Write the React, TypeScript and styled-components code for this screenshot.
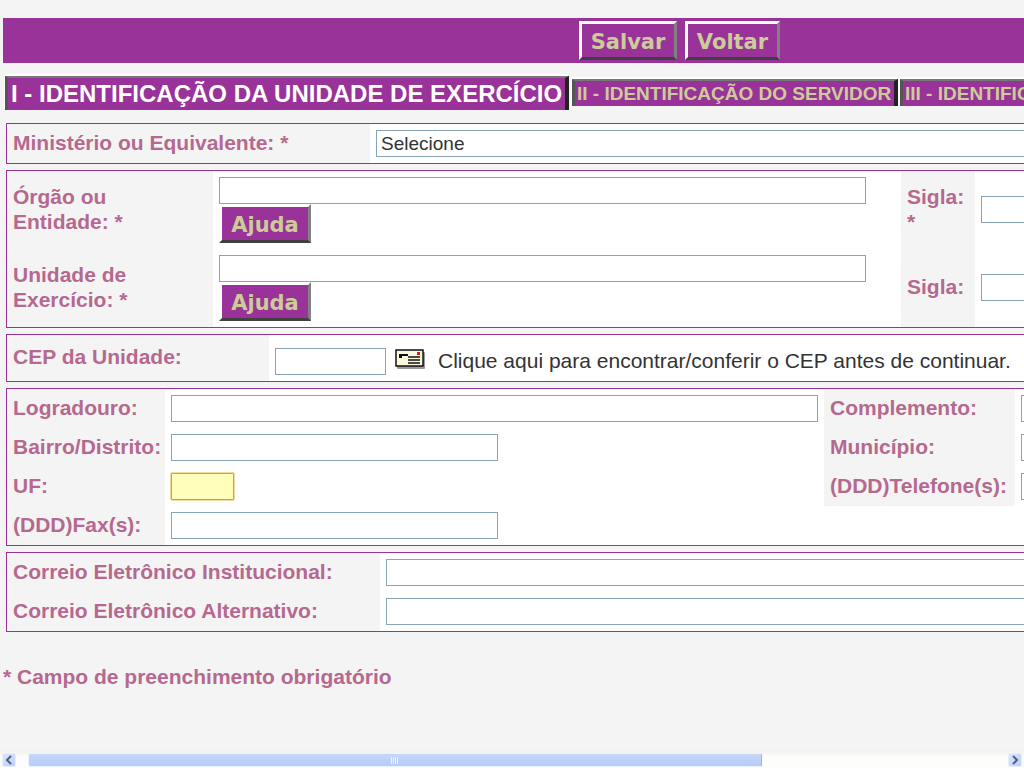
import React from 'react';
import styled, { createGlobalStyle } from 'styled-components';

const PURPLE = '#993399';
const KHAKI = '#cccc99';
const ROSE = '#b5698f';
const PAGE = '#f4f4f4';

const GlobalStyle = createGlobalStyle`
  html, body {
    margin: 0;
    padding: 0;
    background: ${PAGE};
  }
`;

const Page = styled.div`
  width: 1024px;
  height: 768px;
  overflow: hidden;
  display: flex;
  flex-direction: column;
  font-family: "Liberation Sans", Arial, sans-serif;
  background: ${PAGE};
  padding-top: 18px;
  box-sizing: border-box;
`;

const Toolbar = styled.div`
  flex: none;
  height: 45px;
  margin-left: 3px;
  padding: 3px 0 0 576px;
  box-sizing: border-box;
  background: ${PURPLE};
  display: flex;
  align-items: flex-start;
  gap: 8px;
`;

const Button = styled.button<{ $w: number }>`
  width: ${(p) => p.$w}px;
  height: 39px;
  padding: 2px 0 0;
  border-style: solid;
  border-width: 3px;
  border-color: #ffffff #808080 #404040 #ffffff;
  background: ${PURPLE};
  color: ${KHAKI};
  font-family: "DejaVu Sans", Verdana, sans-serif;
  font-weight: bold;
  font-size: 21px;
`;

const Tabs = styled.div`
  flex: none;
  display: flex;
  align-items: flex-start;
  height: 34px;
  margin: 13px 0 13px 5px;
  white-space: nowrap;
`;

const Tab = styled.div<{ $active?: boolean; $w: number }>`
  flex: none;
  box-sizing: border-box;
  width: ${(p) => p.$w}px;
  overflow: hidden;
  margin-top: ${(p) => (p.$active ? 0 : 3)}px;
  margin-right: ${(p) => (p.$active ? 3 : 2)}px;
  height: ${(p) => (p.$active ? 34 : 27)}px;
  padding: 0 0 0 ${(p) => (p.$active ? 3 : 2)}px;
  display: flex;
  align-items: center;
  background: ${PURPLE};
  border-style: solid;
  border-width: 2px 4px 0 3px;
  border-color: #777777 #222222 ${PURPLE} #555555;
  box-shadow: -1px -2px 0 #ffffff;
  color: ${(p) => (p.$active ? '#ffffff' : KHAKI)};
  font-size: ${(p) => (p.$active ? 24 : 19)}px;
  font-weight: bold;
`;

const Panel = styled.section<{ $cols: string; $rows?: string }>`
  flex: none;
  width: 1100px;
  margin: 0 0 6px 6px;
  box-sizing: border-box;
  border: 1px solid ${PURPLE};
  background: #ffffff;
  display: grid;
  grid-template-columns: ${(p) => p.$cols};
  grid-auto-rows: ${(p) => p.$rows ?? '39px'};
`;

const Label = styled.div<{ $lift?: number }>`
  padding: 0 6px ${(p) => p.$lift ?? 2}px;
  display: flex;
  align-items: center;
  background: ${PAGE};
  color: ${ROSE};
  font-size: 21px;
  font-weight: bold;
  line-height: 25px;
  white-space: nowrap;
`;

const Value = styled.div<{ $center?: boolean }>`
  padding: 6px 6px ${(p) => (p.$center ? 7 : 6)}px;
  display: flex;
  flex-direction: column;
  align-items: flex-start;
  justify-content: ${(p) => (p.$center ? 'center' : 'flex-start')};
  min-width: 0;
`;

const Inline = styled.div`
  padding: 13px 6px 0;
  display: flex;
  align-items: flex-start;
`;

const Input = styled.input<{ $w: number; $warn?: boolean }>`
  flex: none;
  width: ${(p) => p.$w}px;
  height: 27px;
  padding: 0 4px;
  margin: 0;
  box-sizing: border-box;
  border: 1px solid ${(p) => (p.$warn ? '#c4a25c' : '#88a4bb')};
  border-radius: ${(p) => (p.$warn ? 1 : 0)}px;
  box-shadow: ${(p) => (p.$warn ? '0 0 0 1px #f2d9a0' : 'none')};
  background: ${(p) => (p.$warn ? '#ffffbb' : '#ffffff')};
  font-family: inherit;
  font-size: 19px;
  outline: none;
`;

const Select = styled.select`
  width: 700px;
  height: 27px;
  padding: 0 0 0 4px;
  margin: 0;
  box-sizing: border-box;
  border: 1px solid #88a4bb;
  border-radius: 0;
  background: #ffffff;
  color: #333333;
  font-family: inherit;
  font-size: 19px;
  appearance: none;
`;

const CardIcon = styled.svg`
  flex: none;
  margin: 1px 13px 0 9px;
`;

const Hint = styled.span`
  color: #333333;
  font-size: 21px;
  line-height: 26px;
  white-space: nowrap;
`;

const Note = styled.p`
  flex: none;
  margin: 27px 0 0 3px;
  color: ${ROSE};
  font-size: 21px;
  font-weight: bold;
  line-height: 24px;
`;

const Scrollbar = styled.div`
  flex: none;
  margin-top: auto;
  height: 17px;
  padding: 2px 2px 1px;
  box-sizing: border-box;
  display: flex;
  align-items: stretch;
  background: linear-gradient(180deg, #f1f0ea, #fcfcfa 30%, #fdfdfb);
`;

const ScrollArrow = styled.div`
  flex: none;
  width: 14px;
  box-sizing: border-box;
  border: 1px solid #e8effc;
  border-radius: 2px;
  background: linear-gradient(135deg, #dbe6fd, #bccffa);
  display: flex;
  align-items: center;
  justify-content: center;
`;

const ScrollTrack = styled.div`
  flex: 1;
  padding: 0 246px 0 12px;
  display: flex;
  min-width: 0;
`;

const ScrollThumb = styled.div`
  flex: 1;
  box-sizing: border-box;
  border: 1px solid #edf2fe;
  border-right-color: #9db4e2;
  border-radius: 2px;
  background: linear-gradient(180deg, #c6d7fc, #b8ccf8);
  display: flex;
  align-items: center;
  justify-content: center;
`;

const Grip = styled.svg`
  flex: none;
`;

function Arrow ({ left }: { left?: boolean }): React.ReactElement {
  return (
    <ScrollArrow>
      <svg height='10' viewBox='0 0 8 10' width='8'>
        <path
          d={left ? 'M6 1 2 5l4 4' : 'M2 1l4 4-4 4'}
          fill='none'
          stroke='#4d6185'
          strokeWidth='2'
        />
      </svg>
    </ScrollArrow>
  );
}

export default function App (): React.ReactElement {
  return (
    <Page>
      <GlobalStyle />
      <Toolbar>
        <Button $w={98}>Salvar</Button>
        <Button $w={95}>Voltar</Button>
      </Toolbar>

      <Tabs>
        <Tab $active $w={564}>I - IDENTIFICAÇÃO DA UNIDADE DE EXERCÍCIO</Tab>
        <Tab $w={326}>II - IDENTIFICAÇÃO DO SERVIDOR</Tab>
        <Tab $w={326}>III - IDENTIFICAÇÃO DO CARGO</Tab>
      </Tabs>

      <Panel $cols='363px 1fr'>
        <Label>Ministério ou Equivalente: *</Label>
        <Value>
          <Select defaultValue='0'>
            <option value='0'>Selecione</option>
          </Select>
        </Value>
      </Panel>

      <Panel $cols='206px 688px 74px 1fr' $rows='78px'>
        <Label>Órgão ou<br />Entidade: *</Label>
        <Value>
          <Input $w={647} />
          <Button $w={92}>Ajuda</Button>
        </Value>
        <Label>Sigla:<br />*</Label>
        <Value $center>
          <Input $w={100} />
        </Value>
        <Label>Unidade de<br />Exercício: *</Label>
        <Value>
          <Input $w={647} />
          <Button $w={92}>Ajuda</Button>
        </Value>
        <Label $lift={4}>Sigla:</Label>
        <Value $center>
          <Input $w={100} />
        </Value>
      </Panel>

      <Panel $cols='262px 1fr' $rows='46px'>
        <Label $lift={4}>CEP da Unidade:</Label>
        <Inline>
          <Input $w={111} />
          <CardIcon height='20' viewBox='0 0 30 20' width='30'>
            <rect fill='#9a9a9a' height='17' rx='1' width='28' x='2' y='3' />
            <rect fill='#fbf6dc' height='16' stroke='#111111' strokeWidth='1.5' width='27' x='1' y='1' />
            <path d='M4 5h9v2H7v2H4z' fill='#111111' />
            <path d='M13 8h12M13 11h12M13 14h12' stroke='#111111' strokeWidth='1.6' />
            <rect fill='#e01818' height='3' width='3' x='22' y='3' />
          </CardIcon>
          <Hint>Clique aqui para encontrar/conferir o CEP antes de continuar.</Hint>
        </Inline>
      </Panel>

      <Panel $cols='158px 659px 191px 1fr'>
        <Label>Logradouro:</Label>
        <Value><Input $w={647} /></Value>
        <Label>Complemento:</Label>
        <Value><Input $w={100} /></Value>
        <Label>Bairro/Distrito:</Label>
        <Value><Input $w={327} /></Value>
        <Label>Município:</Label>
        <Value><Input $w={100} /></Value>
        <Label>UF:</Label>
        <Value><Input $w={63} $warn /></Value>
        <Label>(DDD)Telefone(s):</Label>
        <Value><Input $w={100} /></Value>
        <Label>(DDD)Fax(s):</Label>
        <Value><Input $w={327} /></Value>
      </Panel>

      <Panel $cols='373px 1fr'>
        <Label>Correio Eletrônico Institucional:</Label>
        <Value><Input $w={700} /></Value>
        <Label>Correio Eletrônico Alternativo:</Label>
        <Value><Input $w={700} /></Value>
      </Panel>

      <Note>* Campo de preenchimento obrigatório</Note>

      <Scrollbar>
        <Arrow left />
        <ScrollTrack>
          <ScrollThumb>
            <Grip height='7' viewBox='0 0 8 7' width='8'>
              <path d='M.5 0v7M2.5 0v7M4.5 0v7M6.5 0v7' stroke='#eef3fe' />
            </Grip>
          </ScrollThumb>
        </ScrollTrack>
        <Arrow />
      </Scrollbar>
    </Page>
  );
}
